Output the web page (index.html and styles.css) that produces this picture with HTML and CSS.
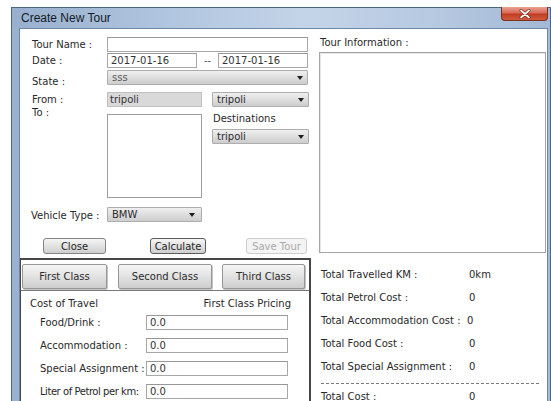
FILE: index.html
```html
<!DOCTYPE html>
<html>
<head>
<meta charset="utf-8">
<title>Create New Tour</title>
<link rel="stylesheet" href="styles.css">
</head>
<body>
<div class="window">
  <div class="titlebar">
    <span class="title">Create New Tour</span>
    <span class="close-btn">
      <svg width="12" height="10" viewBox="0 0 12 10"><path d="M2 1.5 L10 8.5 M10 1.5 L2 8.5" stroke="#7a2a1a" stroke-width="3" stroke-linecap="round"/><path d="M2 1.5 L10 8.5 M10 1.5 L2 8.5" stroke="#ffffff" stroke-width="1.7" stroke-linecap="round"/></svg>
    </span>
  </div>
  <div class="body-row">
    <div class="client">
      <div class="top">
        <div class="form">
          <div class="row row-name">
            <span class="lbl">Tour Name :</span>
            <span class="input w201"></span>
          </div>
          <div class="row row-date">
            <span class="lbl">Date :</span>
            <span class="input w90">2017-01-16</span>
            <span class="sep">--</span>
            <span class="input w90">2017-01-16</span>
          </div>
          <div class="row row-state">
            <span class="lbl lbl-state">State :</span>
            <span class="combo w201"><span class="muted">sss</span><i class="arrow"></i></span>
          </div>
          <div class="row row-from">
            <span class="lbl lbl-from">From :</span>
            <span class="input disabled w95">tripoli</span>
            <span class="combo w97 ml10">tripoli<i class="arrow"></i></span>
          </div>
          <div class="row row-to">
            <span class="lbl">To :</span>
            <span class="listbox"></span>
            <div class="dest">
              <span class="dest-lbl">Destinations</span>
              <span class="combo w97 h16">tripoli<i class="arrow"></i></span>
            </div>
          </div>
          <div class="row row-vehicle">
            <span class="lbl lbl-vehicle">Vehicle Type :</span>
            <span class="combo w95 h16 combo-vehicle">BMW<i class="arrow"></i></span>
          </div>
          <div class="row row-buttons">
            <span class="btn btn-close">Close</span>
            <span class="btn btn-focus btn-calc">Calculate</span>
            <span class="btn btn-disabled btn-save">Save Tour</span>
          </div>
        </div>
        <div class="info">
          <div class="info-lbl">Tour Information :</div>
          <div class="textarea"></div>
        </div>
      </div>
      <div class="bottom">
        <div class="pricing-pane">
          <div class="tabs">
            <span class="tab tab-first">First Class</span>
            <span class="tab tab-second">Second Class</span>
            <span class="tab tab-third">Third Class</span>
          </div>
          <div class="pricing">
            <div class="pricing-head">
              <span>Cost of Travel</span>
              <span>First Class Pricing</span>
            </div>
            <div class="price-row"><span class="price-lbl">Food/Drink :</span><span class="input w142">0.0</span></div>
            <div class="price-row"><span class="price-lbl">Accommodation :</span><span class="input w142">0.0</span></div>
            <div class="price-row"><span class="price-lbl">Special Assignment :</span><span class="input w142">0.0</span></div>
            <div class="price-row"><span class="price-lbl price-lbl-tight">Liter of Petrol per km:</span><span class="input w142">0.0</span></div>
          </div>
        </div>
        <div class="totals">
          <div class="total-row"><span class="total-lbl">Total Travelled KM :</span><span>0km</span></div>
          <div class="total-row"><span class="total-lbl">Total Petrol Cost :</span><span>0</span></div>
          <div class="total-row"><span class="total-lbl">Total Accommodation Cost :</span><span class="val-tight">0</span></div>
          <div class="total-row"><span class="total-lbl">Total Food Cost :</span><span>0</span></div>
          <div class="total-row"><span class="total-lbl">Total Special Assignment :</span><span>0</span></div>
          <div class="dashes"></div>
          <div class="total-row total-sum"><span class="total-lbl">Total Cost :</span><span>0</span></div>
        </div>
      </div>
    </div>
  </div>
</div>
</body>
</html>
```

FILE: styles.css
```css
html, body {
  margin: 0;
  padding: 0;
  overflow: hidden;
  background-color: #ffffff;
}

body {
  font-family: "DejaVu Sans", Verdana, sans-serif;
  font-size: 10px;
  color: #282828;
}

/* ---- window frame ---- */
.window {
  margin: 7px 0 0 11px;
  width: 540px;
  height: 430px;
  box-sizing: border-box;
  border: 1px solid #4e6582;
  border-bottom: none;
  display: flex;
  flex-direction: column;
}

.titlebar {
  height: 20px;
  flex: none;
  display: flex;
  justify-content: space-between;
  align-items: flex-start;
  padding: 0 2px 0 7px;
  background: #aec3dd linear-gradient(90deg, #98b0cf, #b1c6df 30%, #c4d4e8 55%, #b5c8e0 80%, #a2b8d5);
}

.title {
  font-family: "Liberation Sans", Arial, sans-serif;
  font-size: 12px;
  color: #141b24;
  padding: 3px 0 0 2px;
}

.close-btn {
  width: 47px;
  height: 14px;
  margin-top: -1px;
  box-sizing: border-box;
  border: 1px solid #7d2f20;
  border-top: none;
  border-radius: 0 0 4px 4px;
  display: flex;
  align-items: center;
  justify-content: center;
  background: #c94a30 linear-gradient(180deg, #e9a294, #d76a55 45%, #c23d22 55%, #cf5a3c);
}

/* side frame drawn as borders */
.body-row {
  flex: 1;
  display: flex;
  border-left: 7px solid #9ab1cf;
  border-right: 2px solid #a6bbd6;
}

.client {
  flex: 1;
  background-color: #ffffff;
  border: 1px solid #7087a6;
  border-bottom: none;
  display: flex;
  flex-direction: column;
}

/* ---- upper area ---- */
.top {
  height: 229px;
  flex: none;
  display: flex;
}

.form {
  width: 289px;
  flex: none;
  box-sizing: border-box;
  padding: 8px 0 0 12px;
}

.row {
  display: flex;
  align-items: flex-start;
}

.lbl {
  width: 75px;
  flex: none;
  line-height: 15px;
  white-space: nowrap;
}

.row-date { margin-top: 1px; }
.row-state { margin-top: 2px; height: 15px; }
.row-from { margin-top: 7px; height: 15px; }
.row-vehicle { margin-top: 9px; height: 16px; }
.row-buttons { margin-top: 15px; }

.lbl-state { line-height: 12px; margin-top: 6px; }
.lbl-from { line-height: 12px; margin-top: 2px; }
.row-to .lbl { line-height: 12px; }
.lbl-vehicle { line-height: 12px; margin-top: 3px; margin-left: -1px; width: 76px; }

.input {
  height: 15px;
  box-sizing: border-box;
  border: 1px solid #a8a8a8;
  border-top-color: #979797;
  background-color: #ffffff;
  line-height: 13px;
  padding: 0 3px;
  color: #333;
  white-space: nowrap;
  flex: none;
}

.input.disabled {
  background-color: #d9d9d9;
  border-color: #c0c0c0;
  padding-left: 2px;
}

.w201 { width: 201px; }
.w142 { width: 142px; }
.w97 { width: 97px; }
.w95 { width: 95px; }
.w90 { width: 90px; }
.ml10 { margin-left: 10px; }
.h16 { height: 16px; }

.sep {
  width: 21px;
  flex: none;
  text-align: center;
  line-height: 15px;
  color: #555;
}

.combo {
  height: 15px;
  box-sizing: border-box;
  border: 1px solid #adadad;
  border-radius: 1px;
  background: #dedede linear-gradient(180deg, #efefef, #dedede 50%, #cdcdcd);
  display: flex;
  align-items: center;
  justify-content: space-between;
  padding: 0 4px 0 4px;
  color: #2c2c2c;
  flex: none;
}

.combo-vehicle { padding-right: 6px; }

.muted { color: #5a5a5a; }

.arrow {
  width: 0;
  height: 0;
  border-left: 3.5px solid transparent;
  border-right: 3.5px solid transparent;
  border-top: 4px solid #1e1e1e;
}

.listbox {
  width: 95px;
  height: 84px;
  margin-top: 7px;
  box-sizing: border-box;
  border: 1px solid #9e9e9e;
  background-color: #ffffff;
  flex: none;
}

.dest {
  margin-left: 10px;
  display: flex;
  flex-direction: column;
}

.dest-lbl {
  line-height: 12px;
  margin-top: 6px;
  padding-left: 1px;
}

.dest .combo { margin-top: 4px; }

.btn {
  height: 16px;
  box-sizing: border-box;
  border: 1px solid #858585;
  border-radius: 3px;
  background: #e2e2e2 linear-gradient(180deg, #f5f5f5, #e2e2e2 50%, #cecece);
  display: flex;
  align-items: center;
  justify-content: center;
  color: #262626;
  flex: none;
}

.btn-close { width: 63px; margin-left: 11px; }
.btn-calc { width: 56px; margin-left: 44px; }
.btn-save { width: 61px; margin-left: 40px; }

.btn-focus { border-color: #5c5c5c; }

.btn-disabled {
  border-color: #cdcdcd;
  background: #f4f4f4;
  color: #a9a9a9;
}

.info {
  flex: 1;
  box-sizing: border-box;
  padding: 8px 0 0 10px;
}

.info-lbl {
  line-height: 12px;
  padding-left: 1px;
}

.textarea {
  margin-top: 3px;
  width: 227px;
  height: 201px;
  box-sizing: border-box;
  border: 1px solid #a4a4a4;
  background-color: #ffffff;
  box-shadow: inset 1px 1px 0 #e6e6e6;
}

/* ---- lower area ---- */
.bottom {
  flex: 1;
  display: flex;
}

.pricing-pane {
  width: 291px;
  flex: none;
  box-sizing: border-box;
  border-top: 2px solid #474747;
  border-left: 1px solid #474747;
  border-right: 2px solid #474747;
}

.tabs {
  display: flex;
  margin-top: 4px;
  margin-bottom: 1px;
}

.tab {
  height: 25px;
  box-sizing: border-box;
  border: 1px solid #979797;
  border-radius: 2px;
  background: #e2e2e2 linear-gradient(180deg, #f6f6f6, #e2e2e2 50%, #cdcdcd);
  box-shadow: 1px 1px 0 #c4c4c4;
  display: flex;
  align-items: center;
  justify-content: center;
  color: #2c2c2c;
  flex: none;
}

.tab-first { width: 85px; margin-left: 1px; }
.tab-second { width: 94px; margin-left: 11px; }
.tab-third { width: 83px; margin-left: 10px; }

.pricing {
  border-top: 1px solid #7a7a7a;
  padding: 7px 18px 0 9px;
}

.pricing-head {
  display: flex;
  justify-content: space-between;
  line-height: 12px;
}

.price-row {
  display: flex;
  align-items: center;
  margin-top: 8px;
}

.pricing-head + .price-row { margin-top: 5px; }

.price-lbl {
  width: 116px;
  flex: none;
  padding-left: 10px;
  box-sizing: border-box;
  white-space: nowrap;
}

.price-lbl-tight {
  letter-spacing: -0.45px;
}

.totals {
  flex: 1;
  padding: 5px 0 0 10px;
}

.total-row {
  display: flex;
  height: 23px;
  line-height: 23px;
}

.total-lbl {
  width: 148px;
  flex: none;
  white-space: nowrap;
}

.val-tight { margin-left: -2px; }

.dashes {
  margin-top: 5px;
  width: 218px;
  height: 0;
  border-top: 1px dashed #7a7a7a;
}

.total-sum {
  margin-top: 7px;
  height: 12px;
  line-height: 12px;
}
```
